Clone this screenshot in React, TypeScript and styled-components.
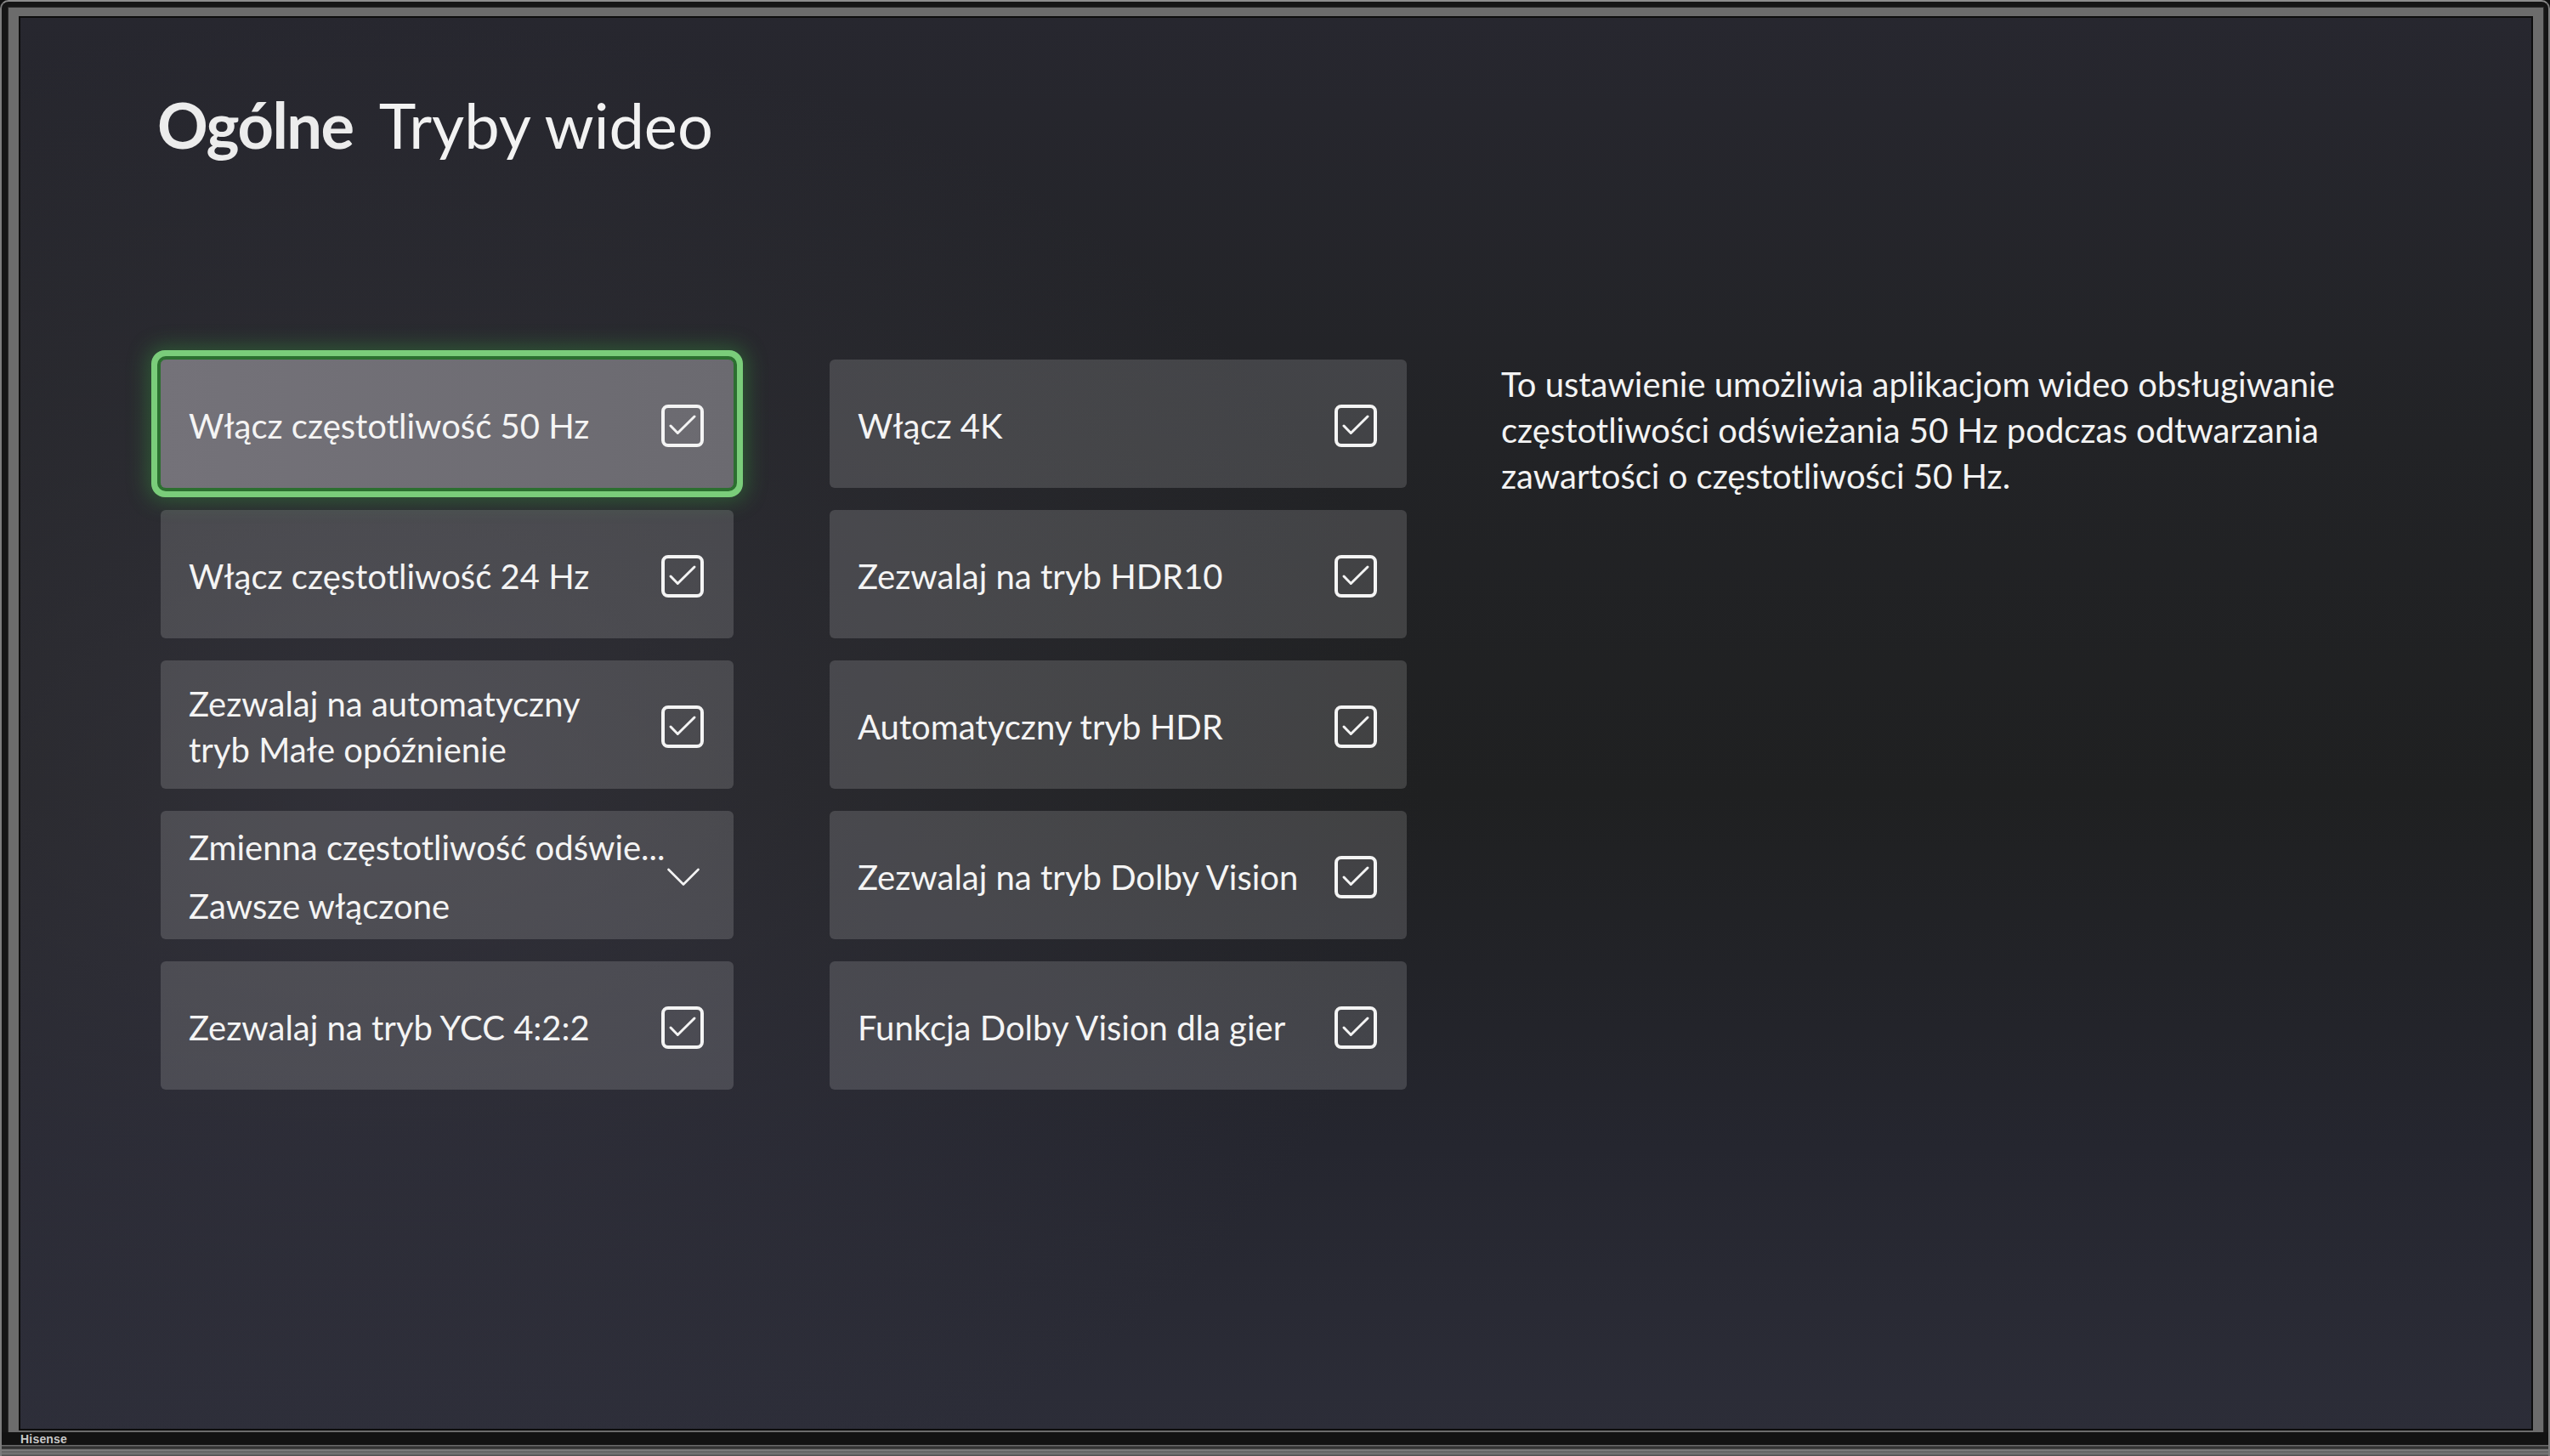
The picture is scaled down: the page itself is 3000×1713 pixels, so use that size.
import React from "react";
import styled, { createGlobalStyle, css } from "styled-components";

const Global = createGlobalStyle`
  html, body { margin: 0; padding: 0; background: #0f0f0f; }
  body { width: 3000px; height: 1713px; overflow: hidden; }
  *, *::before, *::after { box-sizing: border-box; }
`;

const FONT = `Lato, "Open Sans", "Noto Sans", sans-serif`;

const Tv = styled.div`
  width: 3000px;
  height: 1713px;
  display: flex;
  flex-direction: column;
  background: #151515;
  border-top: 2px solid #8c8c8c;
  border-left: 2px solid #7c7c7c;
  border-right: 2px solid #7c7c7c;
  border-radius: 10px 10px 0 0;
  padding: 7px 6px 0 8px;
`;

const Frame = styled.div`
  height: 1676px;
  display: flex;
  border-style: solid;
  border-color: #6c6c6c;
  border-width: 10px 12px 2px 12px;
  box-shadow: 0 0 0 1px #2a2a2a;
`;

const Screen = styled.main`
  flex: 1;
  display: flex;
  flex-direction: column;
  padding: 90px 0 0 167px;
  overflow: hidden;
  box-shadow: inset 0 0 0 2px #0d0d0d;
  background:
    radial-gradient(ellipse 42% 55% at 14% 55%, rgba(66, 64, 78, 0.5), rgba(66, 64, 78, 0) 100%),
    linear-gradient(180deg, #27272f 0%, #222326 30%, #1f2021 55%, #25262f 80%, #2c2d38 100%);
`;

const Title = styled.h1`
  margin: 0 0 0 -4px;
  display: flex;
  align-items: baseline;
  gap: 30px;
  font-family: ${FONT};
  font-size: 74px;
  line-height: 76px;
  font-weight: 400;
  color: #f2f2f2;
`;

const TitleStrong = styled.span`
  font-weight: 700;
  letter-spacing: -1.5px;
  color: #ececec;
`;

const Body = styled.div`
  display: flex;
  align-items: flex-start;
  margin-top: 238px;
`;

const Grid = styled.div`
  display: grid;
  grid-template-columns: 674px 679px;
  grid-template-rows: repeat(5, 151px);
  grid-auto-flow: column;
  column-gap: 113px;
  row-gap: 26px;
`;

const Tile = styled.div<{ $focused?: boolean }>`
  display: flex;
  align-items: center;
  justify-content: space-between;
  padding: 4px 35px 0 33px;
  border-radius: 6px;
  background: rgba(255, 255, 255, 0.15);
  color: #f4f4f4;
  font-family: ${FONT};
  font-size: 40px;
  line-height: 54px;
  ${(p) =>
    p.$focused &&
    css`
      background: linear-gradient(90deg, #747279 0%, #6b6a70 100%);
      box-shadow: 0 0 0 4px #2c6f30, 0 0 0 11px #7acd7a,
        0 0 24px 15px rgba(56, 168, 64, 0.38);
    `}
`;

const Label = styled.span`
  display: block;
`;

const SelectText = styled.div`
  display: flex;
  flex-direction: column;
  gap: 15px;
`;

const Description = styled.p`
  margin: 2px 0 0 111px;
  width: 1020px;
  font-family: ${FONT};
  font-size: 40px;
  line-height: 54px;
  color: #f3f3f3;
`;

const DescLine = styled.span`
  display: block;
  white-space: nowrap;
`;

const BottomBar = styled.div`
  height: 28px;
  display: flex;
  flex-direction: column;
  margin: 0 -6px 0 -8px;
`;

const LogoRow = styled.div`
  height: 15px;
  display: flex;
  align-items: center;
  padding-left: 22px;
  background: #121212;
`;

const Logo = styled.span`
  font-family: "Liberation Sans", Arial, sans-serif;
  font-weight: 700;
  font-size: 14px;
  line-height: 14px;
  color: #c9c9c9;
  letter-spacing: 0.2px;
`;

const Stripes = styled.div`
  flex: 1;
  background: linear-gradient(
    180deg,
    #7a7a7a 0px,
    #3a3a3a 2px,
    #2a2a2a 4px,
    #8a8a8a 6px,
    #5c5c5c 8px,
    #7a7a7a 10px,
    #4a4a4a 13px
  );
`;

const CheckIcon = () => (
  <svg width="50" height="50" viewBox="0 0 50 50" fill="none">
    <rect x="2" y="2" width="46" height="46" rx="6" stroke="#f4f4f4" strokeWidth="4" />
    <polyline
      points="11,25 19.3,33.5 39,14"
      stroke="#f4f4f4"
      strokeWidth="3"
      strokeLinecap="round"
      strokeLinejoin="round"
    />
  </svg>
);

const ChevronWrap = styled.span`
  display: flex;
  margin-right: 5px;
`;

const Chevron = () => (
  <ChevronWrap>
    <svg width="38" height="22" viewBox="0 0 38 22" fill="none">
      <polyline
        points="1.5,2 19,19.5 36.5,2"
        stroke="#f4f4f4"
        strokeWidth="2.6"
        strokeLinecap="round"
        strokeLinejoin="round"
      />
    </svg>
  </ChevronWrap>
);

type Item =
  | { kind: "check"; lines: string[]; focused?: boolean }
  | { kind: "select"; label: string; value: string };

const items: Item[] = [
  { kind: "check", lines: ["Włącz częstotliwość 50 Hz"], focused: true },
  { kind: "check", lines: ["Włącz częstotliwość 24 Hz"] },
  { kind: "check", lines: ["Zezwalaj na automatyczny", "tryb Małe opóźnienie"] },
  { kind: "select", label: "Zmienna częstotliwość odświe...", value: "Zawsze włączone" },
  { kind: "check", lines: ["Zezwalaj na tryb YCC 4:2:2"] },
  { kind: "check", lines: ["Włącz 4K"] },
  { kind: "check", lines: ["Zezwalaj na tryb HDR10"] },
  { kind: "check", lines: ["Automatyczny tryb HDR"] },
  { kind: "check", lines: ["Zezwalaj na tryb Dolby Vision"] },
  { kind: "check", lines: ["Funkcja Dolby Vision dla gier"] },
];

export default function App() {
  return (
    <>
      <Global />
      <Tv>
        <Frame>
          <Screen>
            <Title>
              <TitleStrong>Ogólne</TitleStrong>
              <span>Tryby wideo</span>
            </Title>
            <Body>
              <Grid>
                {items.map((it, i) =>
                  it.kind === "check" ? (
                    <Tile key={i} $focused={it.focused}>
                      <div>
                        {it.lines.map((l) => (
                          <Label key={l}>{l}</Label>
                        ))}
                      </div>
                      <CheckIcon />
                    </Tile>
                  ) : (
                    <Tile key={i}>
                      <SelectText>
                        <Label>{it.label}</Label>
                        <Label>{it.value}</Label>
                      </SelectText>
                      <Chevron />
                    </Tile>
                  )
                )}
              </Grid>
              <Description>
                <DescLine>To ustawienie umożliwia aplikacjom wideo obsługiwanie</DescLine>
                <DescLine>częstotliwości odświeżania 50 Hz podczas odtwarzania</DescLine>
                <DescLine>zawartości o częstotliwości 50 Hz.</DescLine>
              </Description>
            </Body>
          </Screen>
        </Frame>
        <BottomBar>
          <LogoRow>
            <Logo>Hisense</Logo>
          </LogoRow>
          <Stripes />
        </BottomBar>
      </Tv>
    </>
  );
}
